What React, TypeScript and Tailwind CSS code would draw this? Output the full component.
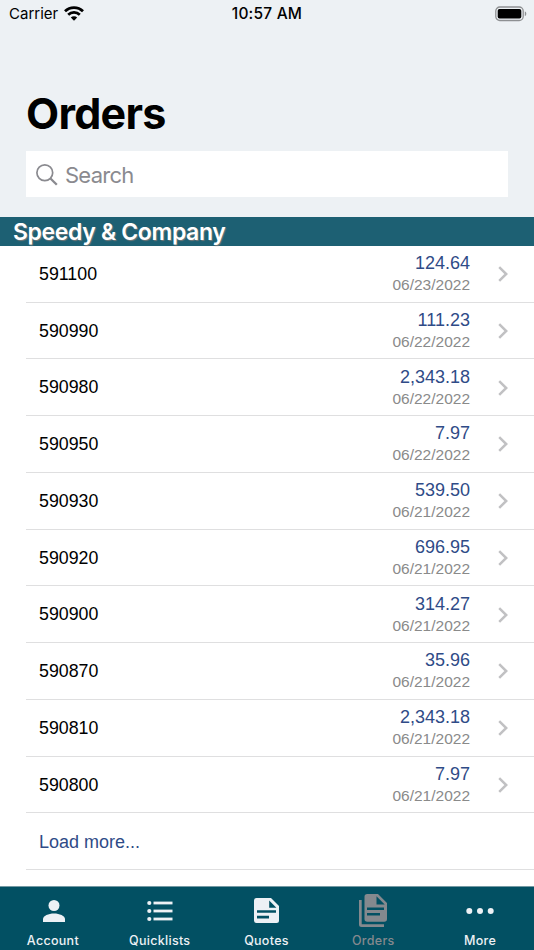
import type { ReactNode } from "react";

type Order = { id: string; total: string; date: string };

const ORDERS: Order[] = [
  { id: "591100", total: "124.64", date: "06/23/2022" },
  { id: "590990", total: "111.23", date: "06/22/2022" },
  { id: "590980", total: "2,343.18", date: "06/22/2022" },
  { id: "590950", total: "7.97", date: "06/22/2022" },
  { id: "590930", total: "539.50", date: "06/21/2022" },
  { id: "590920", total: "696.95", date: "06/21/2022" },
  { id: "590900", total: "314.27", date: "06/21/2022" },
  { id: "590870", total: "35.96", date: "06/21/2022" },
  { id: "590810", total: "2,343.18", date: "06/21/2022" },
  { id: "590800", total: "7.97", date: "06/21/2022" },
];

const TABS: { label: string; icon: ReactNode; active?: boolean }[] = [
  {
    label: "Account",
    icon: (
      <svg width="24" height="22" viewBox="-2 0 24 22" fill="currentColor">
        <circle cx="11" cy="5.5" r="5.5" />
        <path d="M0 22v-3c0-3.3 5.5-5.6 11-5.6S22 15.7 22 19v3z" />
      </svg>
    ),
  },
  {
    label: "Quicklists",
    icon: (
      <svg width="27" height="22" viewBox="-1 0 27 22" fill="currentColor">
        <circle cx="2.3" cy="3" r="2.1" />
        <circle cx="2.3" cy="11" r="2.1" />
        <circle cx="2.3" cy="19" r="2.1" />
        <rect x="6.5" y="1.6" width="19" height="2.8" />
        <rect x="6.5" y="9.6" width="19" height="2.8" />
        <rect x="6.5" y="17.6" width="19" height="2.8" />
      </svg>
    ),
  },
  {
    label: "Quotes",
    icon: (
      <svg width="25" height="25" viewBox="0 0 25 25" fill="currentColor">
        <path
          fillRule="evenodd"
          d="M2.5 0H17l8 8v14.5a2.5 2.5 0 0 1-2.5 2.5h-20A2.5 2.5 0 0 1 0 22.5v-20A2.5 2.5 0 0 1 2.5 0zM15.2 2.5v7.2h7.2zM3 12.2v2.6h19v-2.6zM3 17.8v2.6h12v-2.6z"
        />
      </svg>
    ),
  },
  {
    label: "Orders",
    active: true,
    icon: (
      <svg width="28" height="33" viewBox="0 0 28 33" fill="currentColor">
        <path d="M0 6h2.7v24.3H25V33H2.5A2.5 2.5 0 0 1 0 30.5z" />
        <path
          fillRule="evenodd"
          d="M8.2 0H19l9 9v16a2.7 2.7 0 0 1-2.7 2.7H8.2A2.7 2.7 0 0 1 5.5 25V2.7A2.7 2.7 0 0 1 8.2 0zM17.5 2.3v8.2h8.2zM8 13.5V16h17v-2.5zM8 19v2.5h13V19z"
        />
      </svg>
    ),
  },
  {
    label: "More",
    icon: (
      <svg width="28" height="8" viewBox="0 0 28 8" fill="currentColor">
        <circle cx="3.3" cy="4" r="3" />
        <circle cx="14" cy="4" r="3" />
        <circle cx="24.7" cy="4" r="3" />
      </svg>
    ),
  },
];

function StatusBar() {
  return (
    <div className="grid h-7 grid-cols-3 items-center pr-[7px] pl-[9px]">
      <div className="flex items-center gap-[6px]">
        <span className="text-[15px]">Carrier</span>
        <svg className="-mt-[2px]" width="20" height="15" viewBox="0 0 20 15" fill="none" stroke="#000" strokeWidth="2.7">
          <path d="M1 5.3a12.7 12.7 0 0 1 18 0" />
          <path d="M4.2 8.7a8.2 8.2 0 0 1 11.6 0" />
          <path d="M10 14.8 6.8 11.5a4.5 4.5 0 0 1 6.4 0z" fill="#000" stroke="none" />
        </svg>
      </div>
      <span className="pr-[2px] text-center text-[15.5px] font-medium tracking-[0.2px]">
        10:57 AM
      </span>
      <svg className="-mt-px justify-self-end" width="32" height="16" viewBox="0 0 32 16">
        <rect x="0.8" y="1" width="27.4" height="13.5" rx="4" fill="none" stroke="#8e9092" strokeWidth="1.3" />
        <rect x="2.7" y="2.9" width="23.6" height="9.7" rx="1.8" fill="#000" />
        <path d="M29.8 5.5c2 .5 2 4.1 0 4.6z" fill="#8e9092" />
      </svg>
    </div>
  );
}

function OrderRow({ order }: { order: Order }) {
  return (
    <li className="ml-[26px] flex h-[56.75px] items-center border-b border-[#dfdfe0] pt-px pr-[26px] pl-[13px]">
      <span className="flex-1 text-[17.8px] text-black">{order.id}</span>
      <div className="text-right">
        <div className="text-[18px] leading-[22px] text-[#2f4b87]">{order.total}</div>
        <div className="text-[15.5px] leading-[22px] text-[#8a8a8a]">{order.date}</div>
      </div>
      <svg className="ml-[28px]" width="10" height="16" viewBox="0 0 10 16" fill="none" stroke="#c1c1c3" strokeWidth="2.5">
        <path d="M1.2 1.2 8.2 8l-7 6.8" />
      </svg>
    </li>
  );
}

export default function App() {
  return (
    <div className="flex h-[950px] w-[534px] flex-col overflow-hidden bg-white font-['Inter',sans-serif] text-black">
      <header className="h-[217px] shrink-0 bg-[#edf1f4]">
        <StatusBar />
        <div className="px-[26px] pt-[59px]">
          <h1 className="h-[64px] text-[43px] leading-[53px] font-bold tracking-[-0.7px]">
            Orders
          </h1>
          <div className="flex h-[46px] items-center bg-white pl-[10px] text-[#8a8a8f]">
            <svg className="mt-px" width="22" height="22" viewBox="0 0 22 22" fill="none" stroke="currentColor">
              <circle cx="8.8" cy="8.8" r="7.9" strokeWidth="1.7" />
              <path d="m14.5 14.5 6.3 6.3" strokeWidth="2.3" />
            </svg>
            <span className="ml-[7px] pt-[2px] text-[22px] tracking-[-0.75px]">Search</span>
          </div>
        </div>
      </header>

      <h2 className="h-[28.8px] shrink-0 bg-[#1d6073] pl-[13px] text-[23px] leading-[30px] font-semibold tracking-[-0.35px] text-white [text-shadow:1px_1px_1px_#777]">
        Speedy &amp; Company
      </h2>

      <ul className="flex-1 font-['Liberation_Sans',sans-serif]">
        {ORDERS.map((order) => (
          <OrderRow key={order.id} order={order} />
        ))}
        <li className="ml-[26px] flex h-[56.75px] items-center border-b border-[#dfdfe0] pt-[3px] pl-[13px] text-[18px] text-[#2f4b87]">
          Load more...
        </li>
      </ul>

      <nav className="grid h-[64px] shrink-0 grid-cols-5 border-t border-[#7499a3] bg-[#025063]">
        {TABS.map((tab) => (
          <div
            key={tab.label}
            className={`flex flex-col items-center ${tab.active ? "text-[#85898e]" : "text-[#edf1f5]"}`}
          >
            <div className="-ml-px flex h-[47px] items-center">{tab.icon}</div>
            <span className="-mt-[2px] -ml-px text-[12.5px] leading-[17px] font-medium tracking-[0.3px]">
              {tab.label}
            </span>
          </div>
        ))}
      </nav>
    </div>
  );
}
